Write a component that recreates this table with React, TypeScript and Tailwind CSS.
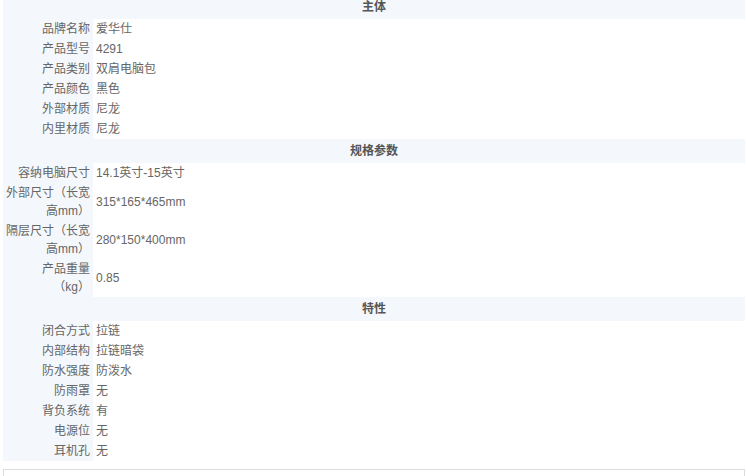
import React from "react";

type Row = [string, string];
type Section = { title: string; rows: Row[] };

const sections: Section[] = [
  {
    title: "主体",
    rows: [
      ["品牌名称", "爱华仕"],
      ["产品型号", "4291"],
      ["产品类别", "双肩电脑包"],
      ["产品颜色", "黑色"],
      ["外部材质", "尼龙"],
      ["内里材质", "尼龙"],
    ],
  },
  {
    title: "规格参数",
    rows: [
      ["容纳电脑尺寸", "14.1英寸-15英寸"],
      ["外部尺寸（长宽\n高mm）", "315*165*465mm"],
      ["隔层尺寸（长宽\n高mm）", "280*150*400mm"],
      ["产品重量\n（kg）", "0.85"],
    ],
  },
  {
    title: "特性",
    rows: [
      ["闭合方式", "拉链"],
      ["内部结构", "拉链暗袋"],
      ["防水强度", "防泼水"],
      ["防雨罩", "无"],
      ["背负系统", "有"],
      ["电源位", "无"],
      ["耳机孔", "无"],
    ],
  },
];

export default function App() {
  return (
    <div
      className="w-[746px] h-[476px] overflow-hidden bg-white text-[12px] text-[#666]"
      style={{ fontFamily: '"Liberation Sans", Arial, "Noto Sans CJK SC", sans-serif' }}
    >
      <div className="-mt-[5px] ml-[3px] w-[742px] bg-[#f4f8fc]">
        {sections.map((s) => (
          <div key={s.title}>
            <div className="h-[24px] flex items-center justify-center font-bold text-[#555]">
              {s.title}
            </div>
            {s.rows.map(([k, v]) => (
              <div key={k} className="flex">
                <div className="w-[90px] shrink-0 py-px pl-[2px] pr-[3px] text-right leading-[18px] whitespace-pre-line">
                  {k}
                </div>
                <div className="flex-1 bg-white flex items-center py-px pl-[3px] leading-[18px]">
                  {v}
                </div>
              </div>
            ))}
          </div>
        ))}
      </div>
      <div className="mt-[8px] ml-[3px] w-[742px] h-[20px] border border-[#dcdcdc]" />
    </div>
  );
}
